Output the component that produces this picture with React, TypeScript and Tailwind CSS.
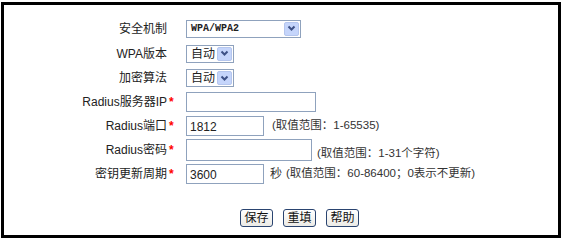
import React from "react";

const cjk = "font-['Liberation_Sans','Noto_Sans_CJK_SC',sans-serif]";

type Row = {
  label: React.ReactNode;
  star?: boolean;
  h: string;
  field: React.ReactNode;
};

function Chevron() {
  return (
    <svg width="9" height="7" viewBox="0 0 9 7">
      <path d="M1.5 1.5 L4.5 4.5 L7.5 1.5" fill="none" stroke="#3d5186" strokeWidth="2" />
    </svg>
  );
}

function Select({ value, width, mono }: { value: string; width: string; mono?: boolean }) {
  return (
    <div className={`${width} h-[18px] border border-[#8fa2bd] bg-white flex items-center p-[1px]`}>
      <span
        className={
          mono
            ? "flex-1 pl-[3px] text-[10px] font-bold text-[#222] font-['Liberation_Mono',monospace]"
            : `flex-1 pl-[3px] text-[12px] text-[#222] ${cjk}`
        }
      >
        {value}
      </span>
      <div className="w-[15px] h-[14px] bg-[#c5d5fb] border border-[#b5c6ee] rounded-[2px] flex items-center justify-center">
        <Chevron />
      </div>
    </div>
  );
}

function Input({ width, value, h = "h-[20px]" }: { width: string; value?: string; h?: string }) {
  return (
    <div className={`${width} ${h} border border-[#8fa2bd] bg-white flex items-start pt-[1px] pl-[3px] text-[12px] text-[#222] font-['Liberation_Sans',sans-serif]`}>
      {value}
    </div>
  );
}

function Hint({ children, className = "" }: { children: React.ReactNode; className?: string }) {
  return <span className={`text-[11.5px] text-[#333] ${cjk} ${className}`}>{children}</span>;
}

const rows: Row[] = [
  { label: "安全机制", h: "h-[25px]", field: <Select value="WPA/WPA2" width="w-[115px]" mono /> },
  { label: "WPA版本", h: "h-[25px]", field: <Select value="自动" width="w-[48px]" /> },
  { label: "加密算法", h: "h-[24px]", field: <Select value="自动" width="w-[48px]" /> },
  { label: "Radius服务器IP", star: true, h: "h-[23px]", field: <Input width="w-[130px]" /> },
  {
    label: "Radius端口",
    star: true,
    h: "h-[25px]",
    field: (
      <>
        <Input width="w-[78px]" value="1812" />
        <Hint className="ml-[8px]">(取值范围：1-65535)</Hint>
      </>
    ),
  },
  {
    label: "Radius密码",
    star: true,
    h: "h-[24px]",
    field: (
      <>
        <Input width="w-[126px]" h="h-[22px]" />
        <Hint className="ml-[5px] mt-[7px]">(取值范围：1-31个字符)</Hint>
      </>
    ),
  },
  {
    label: "密钥更新周期",
    star: true,
    h: "h-[23px]",
    field: (
      <>
        <Input width="w-[78px]" value="3600" />
        <Hint className="ml-[6px] text-[12px]">秒</Hint>
        <Hint className="ml-[4px]">(取值范围：60-86400；0表示不更新)</Hint>
      </>
    ),
  },
];

function Button({ children }: { children: React.ReactNode }) {
  return (
    <button
      className={`w-[33px] h-[18px] border border-[#2a4470] rounded-[3px] bg-gradient-to-b from-white to-[#ecebe6] text-[12px] leading-none text-[#111] ${cjk} flex items-center justify-center`}
    >
      {children}
    </button>
  );
}

export default function App() {
  return (
    <div className="w-[562px] h-[240px] bg-white pt-[2px] pl-[1px]">
      <div className="w-[560px] h-[236px] border-[3px] border-black pt-[11px] flex flex-col">
        {rows.map((row, i) => (
          <div key={i} className={`${row.h} flex items-center`}>
            <div className={`w-[172px] flex justify-end items-center text-[12px] text-[#222] ${cjk}`}>
              <span>{row.label}</span>
              <span className="w-[9px] pl-[2px] text-[#ff0000] text-[12px] font-bold">{row.star ? "*" : ""}</span>
            </div>
            <div className="ml-[10px] flex items-center">{row.field}</div>
          </div>
        ))}
        <div className="mt-[24px] flex justify-center gap-[10px] pl-[37px]">
          <Button>保存</Button>
          <Button>重填</Button>
          <Button>帮助</Button>
        </div>
      </div>
    </div>
  );
}
